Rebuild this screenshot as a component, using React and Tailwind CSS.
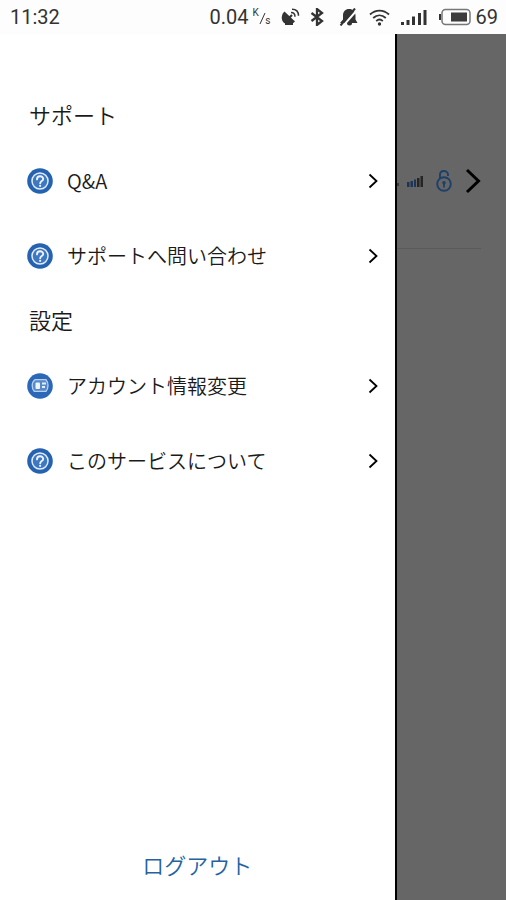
import React from 'react';

const sections = [
  {
    title: 'サポート',
    items: [
      { label: 'Q&A', icon: HelpBadge },
      { label: 'サポートへ問い合わせ', icon: HelpBadge },
    ],
  },
  {
    title: '設定',
    items: [
      { label: 'アカウント情報変更', icon: AccountBadge },
      { label: 'このサービスについて', icon: HelpBadge },
    ],
  },
];

function HelpBadge() {
  return (
    <svg className="w-[26px] h-[26px] shrink-0" viewBox="0 0 26 26" fill="none" aria-hidden="true">
      <circle cx="13" cy="13" r="12.8" fill="#2563b0" />
      <circle cx="13" cy="13" r="8" fill="#3f78c2" stroke="#e3edf9" strokeWidth="1.5" />
      <path
        d="M10 11.4c0-4.2 6.2-4 6.2-.5 0 2.2-3 2.2-3 4.4"
        stroke="#eef4fc" strokeWidth="1.9" strokeLinecap="round"
      />
      <circle cx="13.1" cy="17.8" r="1.1" fill="#eef4fc" />
    </svg>
  );
}

function AccountBadge() {
  return (
    <svg className="w-[26px] h-[26px] shrink-0" viewBox="0 0 26 26" fill="none" aria-hidden="true">
      <circle cx="13" cy="13" r="12.8" fill="#2c68b8" />
      <path
        d="M8 6.7h11c1.4 1.5 2 3.4 2 5.8s-.6 4.3-2 5.8H7.2c-1.4-1.5-2-3.4-2-5.8S6 8.2 8 6.7z"
        fill="#568acb" stroke="#b9d0ee" strokeWidth="1.3"
      />
      <rect x="8.5" y="9.5" width="4.5" height="6.5" rx="1" fill="#edf4fc" />
      <path d="M15 10.500h4M15 14h3" stroke="#e3edf9" strokeWidth="2" />
    </svg>
  );
}

function Chevron({ className }) {
  return (
    <svg className={className} viewBox="0 0 10 16" fill="none" stroke="currentColor" aria-hidden="true">
      <path d="M1.5 1.5 8.5 8l-7 6.500" strokeWidth="1.8" />
    </svg>
  );
}

function StatusBar() {
  return (
    <header className="flex h-[34px] shrink-0 items-center justify-between bg-[#fdfdfd] pr-2 pl-[10px] font-['Roboto',sans-serif] text-[20px] leading-[34px] text-[#333]">
      <span>11:32</span>
      <div className="flex items-center">
        <span>0.04</span>
        <span className="relative ml-1 h-[18px] w-[18px] text-[10px] leading-[10px]">
          <span className="absolute top-0 left-0">K</span>
          <span className="absolute right-0 bottom-0">s</span>
          <svg className="absolute top-1 left-1 h-3 w-[10px]" viewBox="0 0 10 12" stroke="currentColor" aria-hidden="true">
            <path d="M3 12 8 1" />
          </svg>
        </span>
        {/* Satellite dish */}
        <svg className="ml-[10px] h-5 w-[19px]" viewBox="0 0 19 20" fill="none" stroke="currentColor" aria-hidden="true">
          <path d="M3.5 4.5 14 14.5C10 19 3.5 18 1.5 14 0 11 .8 7 3.500 4.500z" fill="currentColor" stroke="none" />
          <path d="m8 11 3-3" strokeWidth="2.200" />
          <path d="M4 15.500V18h8v-3" fill="currentColor" stroke="none" />
          <path d="M10 5.500c2.500 0 4 1.700 4 4.200M11 2.200c4 0 6.500 2.600 6.500 6.600" strokeWidth="1.500" />
        </svg>
        {/* Bluetooth */}
        <svg className="ml-[10px] h-[18px] w-[14px]" viewBox="0 0 14 18" fill="none" stroke="currentColor" aria-hidden="true">
          <path d="m1.500 5 10.500 8-5 4V1l5 4-10.500 8" strokeWidth="2.300" />
        </svg>
        {/* Muted bell */}
        <svg className="ml-[15px] h-[18px] w-[19px]" viewBox="0 0 19 18" fill="currentColor" aria-hidden="true">
          <path d="M10 1c4 0 6.500 2.500 6.500 6.500v4L18.500 15H1l3-3.500v-4C4 3.500 6.500 1 10 1z" />
          <path d="M8 15h5a2.500 2.500 0 0 1-5 0z" />
          <path d="M4 18 18.500 1.500" stroke="#fdfdfd" strokeWidth="2" />
          <path d="M1.500 17.500 16 .5" stroke="currentColor" strokeWidth="2" />
        </svg>
        {/* Wi-Fi */}
        <svg className="ml-[11px] h-[18px] w-[21px]" viewBox="0 0 21 18" fill="none" stroke="currentColor" aria-hidden="true">
          <path d="M1 6.500c5.500-5.300 13.500-5.300 19 0M4.200 10c3.800-3.600 8.800-3.600 12.600 0M7.200 13.200c2-2 4.600-2 6.600 0" strokeWidth="1.800" />
          <circle cx="10.500" cy="16" r="1.700" fill="currentColor" stroke="none" />
        </svg>
        {/* Mobile signal */}
        <svg className="ml-[11px] h-[17px] w-[26px]" viewBox="0 0 26 17" fill="currentColor" aria-hidden="true">
          <path d="M0 13h3v3H0zM5.500 11h3v5h-3zM11 7.500h3V16h-3zM17 4h3v12h-3zM22.500 1h3v15h-3z" />
        </svg>
        {/* Battery */}
        <svg className="ml-3 h-[18px] w-[32px]" viewBox="0 0 32 18" fill="none" aria-hidden="true">
          <rect x="3" y="1.500" width="28" height="15" rx="3.500" stroke="#777" strokeWidth="1.500" />
          <path d="M1 6v6" stroke="#333" strokeWidth="2" />
          <rect x="12" y="4.500" width="16" height="9" fill="#3c3c3c" />
        </svg>
        <span className="ml-[5px]">69</span>
      </div>
    </header>
  );
}

function MenuRow({ item }) {
  return (
    <li>
      <a href="#" className="flex h-[75px] items-center pr-[17px] pl-[27px] text-[#1a1a1a]">
        <item.icon />
        <span className="ml-[14px] flex-1 text-[20px] leading-[30px] font-[350]">{item.label}</span>
        <Chevron className="h-4 w-[10px] text-black" />
      </a>
    </li>
  );
}

// The page that stays visible, dimmed, beside the open drawer
function DimmedPage() {
  return (
    <main className="flex-1 overflow-hidden border-l-2 border-black bg-[#666] pt-20">
      <div className="mr-[25px] flex h-[135px] items-center border-b border-[#5a5a5a]">
        <span className="mt-[7px] h-[3px] w-[2px] bg-[#3c3c3c]" />
        <svg className="ml-auto h-[11px] w-4" viewBox="0 0 16 11" aria-hidden="true">
          <path d="M0 6h2.500v5H0zM3.500 5H6v6H3.500zM7 3.500h2V11H7z" fill="#1d3557" />
          <path d="M10 2h2.500v9H10zM13.500 0H16v11h-2.500z" fill="#252525" />
        </svg>
        <svg className="ml-[13px] h-[22px] w-4" viewBox="0 0 16 22" fill="none" stroke="#1d4069" aria-hidden="true">
          <path d="M4 9V4.700c0-5 8-5 8 0V6" strokeWidth="1.900" />
          <circle cx="8" cy="14" r="6.800" strokeWidth="1.900" />
          <circle cx="8" cy="12.700" r="1.800" fill="#1d4069" stroke="none" />
          <path d="M8 13v4.500" strokeWidth="1.800" />
        </svg>
        <svg className="ml-[13px] h-[26px] w-4" viewBox="0 0 16 26" fill="none" stroke="#000" aria-hidden="true">
          <path d="m2 2 11.500 11L2 24" strokeWidth="3" />
        </svg>
      </div>
    </main>
  );
}

export default function App() {
  return (
    <div className="flex min-h-screen flex-col bg-white font-['Noto_Sans_CJK_JP',sans-serif]">
      <StatusBar />
      <div className="flex flex-1">
        <aside className="flex w-[78%] flex-col bg-white pt-[54px]">
          <nav className="flex-1">
            {sections.map((section) => (
              <section key={section.title}>
                <h2 className="h-[55px] pt-[10px] pl-[29px] text-[22px] leading-[32px] font-[350] text-[#1a1a1a]">
                  {section.title}
                </h2>
                <ul>
                  {section.items.map((item) => (
                    <MenuRow key={item.label} item={item} />
                  ))}
                </ul>
              </section>
            ))}
          </nav>
          <button type="button" className="h-[72px] text-[22px] leading-[32px] font-[350] text-[#2563a0]">
            ログアウト
          </button>
        </aside>
        <DimmedPage />
      </div>
    </div>
  );
}
